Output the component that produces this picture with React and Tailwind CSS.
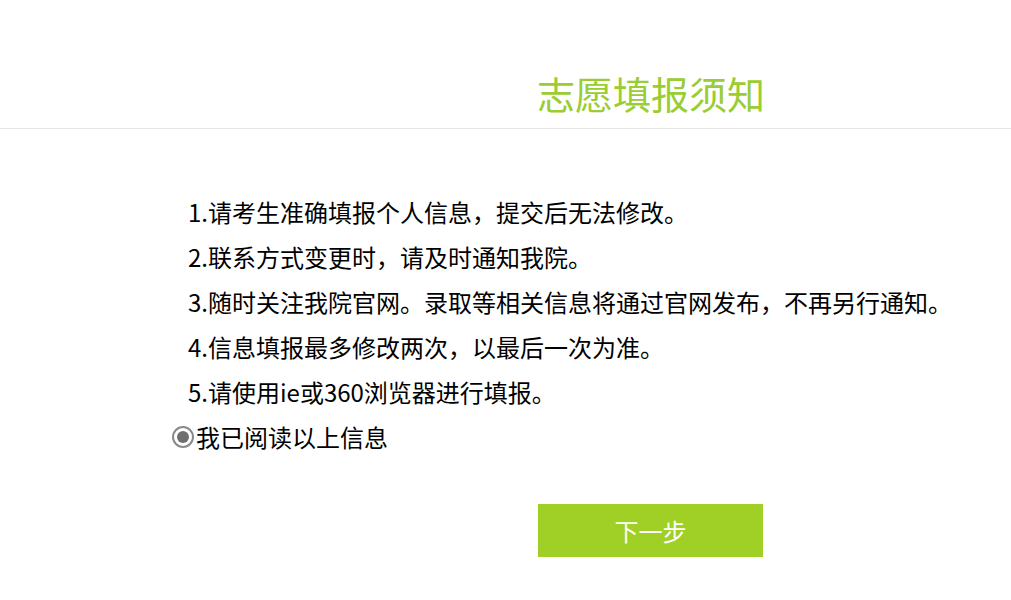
export default function App() {
  const items = [
    "1.请考生准确填报个人信息，提交后无法修改。",
    "2.联系方式变更时，请及时通知我院。",
    "3.随时关注我院官网。录取等相关信息将通过官网发布，不再另行通知。",
    "4.信息填报最多修改两次，以最后一次为准。",
    "5.请使用ie或360浏览器进行填报。",
  ];
  return (
    <div
      className="w-[1011px] h-[600px] bg-white text-black"
      style={{ fontFamily: '"Noto Sans CJK SC", "Noto Sans", sans-serif' }}
    >
      <div className="h-[129px] border-b border-[#e5e5e5] flex items-end">
        <div className="ml-[537px] whitespace-nowrap pb-[10px] text-[38px] leading-[50px] text-[#9acd32]">
          志愿填报须知
        </div>
      </div>
      <div className="pt-[60px] pl-[188px] flex flex-col">
        {items.map((t) => (
          <div key={t} className="text-[24px] leading-[45px] h-[45px]">
            {t}
          </div>
        ))}
      </div>
      <div className="pl-[172px] flex items-center h-[45px]">
        <span className="w-[22px] h-[22px] rounded-full border-2 border-[#8a8a8a] flex items-center justify-center">
          <span className="w-[12px] h-[12px] rounded-full bg-[#6f6f6f]" />
        </span>
        <span className="ml-[2px] text-[24px] leading-[45px]">我已阅读以上信息</span>
      </div>
      <div className="pl-[538px] pt-[45px]">
        <button className="w-[225px] h-[53px] bg-[#a0cf25] text-white text-[24px] flex items-center justify-center">
          下一步
        </button>
      </div>
    </div>
  );
}
